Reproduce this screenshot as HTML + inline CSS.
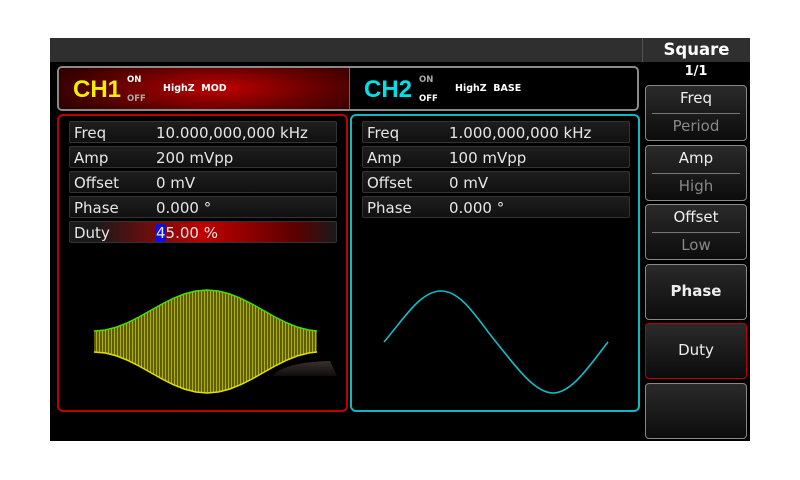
<!DOCTYPE html>
<html><head><meta charset="utf-8"><style>
*{margin:0;padding:0;box-sizing:border-box}
body{width:800px;height:480px;background:#fff;position:relative;overflow:hidden;font-family:"DejaVu Sans","Liberation Sans",sans-serif}
.scr{position:absolute;left:50px;top:38px;width:700px;height:403px;background:#000}
.top{position:absolute;left:50px;top:38px;width:592px;height:24px;background:#2f2f2f}
.abs{position:absolute}
.hdr{position:absolute;left:57px;top:66px;width:582px;height:45px;border:2px solid #8a8a8a;border-radius:5px;overflow:hidden;background:#000}
.h1{position:absolute;left:0;top:0;width:291px;height:100%;background:radial-gradient(ellipse 60% 90% at 55% 50%,#c00000 0%,#6a0000 55%,#300000 100%);border-right:1px solid #666}
.ch{position:absolute;font-weight:bold;font-size:24px;top:8px;font-family:"Liberation Sans",sans-serif}
.on{position:absolute;font-size:8.5px;font-weight:bold}
.mod{position:absolute;font-size:9.5px;font-weight:bold;color:#fff;top:15px}
.panel{position:absolute;top:114px;height:298px;border:2px solid;border-radius:6px}
.row{position:absolute;height:22px;border:1px solid #333;border-radius:2px;background:linear-gradient(#1e1e1e,#111);color:#e6e6e6;font-size:15px;line-height:22px}
.row .l{position:absolute;left:4px}
.row .v{position:absolute;left:86px}
.btn{position:absolute;left:645px;width:102px;border:1.5px solid #888;border-radius:4px;background:linear-gradient(#2a2a2a,#0c0c0c);color:#eee;font-size:15px;text-align:center}
.sep{position:absolute;left:6px;right:6px;height:1px;background:#777}
</style></head><body>
<div class="scr"></div>
<div class="top"></div>
<div class="abs" style="left:642px;top:38px;width:108px;height:24px;background:#2f2f2f;border-left:1px solid #555;color:#fff;font-weight:bold;font-size:16.5px;text-align:center;line-height:24px">Square</div>
<div class="abs" style="left:642px;top:64px;width:108px;text-align:center;color:#fff;font-size:13px;font-weight:bold">1/1</div>

<div class="hdr">
 <div class="h1"></div>
 <div class="ch" style="left:14px;color:#f0f000">CH1</div>
 <div class="on" style="left:68px;top:7px;color:#fff">ON</div>
 <div class="on" style="left:68px;top:26px;color:#aaa">OFF</div>
 <div class="mod" style="left:104px">HighZ&nbsp; MOD</div>
 <div class="ch" style="left:305px;color:#00e0e8">CH2</div>
 <div class="on" style="left:360px;top:7px;color:#aaa">ON</div>
 <div class="on" style="left:360px;top:26px;color:#fff">OFF</div>
 <div class="mod" style="left:396px">HighZ&nbsp; BASE</div>
</div>

<div class="panel" style="left:57px;width:291px;border-color:#c00000"></div>
<div class="panel" style="left:350px;width:290px;border-color:#10b8c0"></div>

<div class="row" style="left:69px;top:121px;width:268px"><span class="l">Freq</span><span class="v">10.000,000,000 kHz</span></div>
<div class="row" style="left:69px;top:146px;width:268px"><span class="l">Amp</span><span class="v">200 mVpp</span></div>
<div class="row" style="left:69px;top:171px;width:268px"><span class="l">Offset</span><span class="v">0 mV</span></div>
<div class="row" style="left:69px;top:196px;width:268px"><span class="l">Phase</span><span class="v">0.000 °</span></div>
<div class="row" style="left:69px;top:221px;width:268px;background:linear-gradient(90deg,#1a1a1a 10%,#c00000 50%,#5a0000 85%,#1a1a1a)"><span class="l">Duty</span><span class="v"><span style="background:#1010e0">4</span>5.00 %</span></div>

<div class="row" style="left:362px;top:121px;width:268px"><span class="l">Freq</span><span class="v">1.000,000,000 kHz</span></div>
<div class="row" style="left:362px;top:146px;width:268px"><span class="l">Amp</span><span class="v">100 mVpp</span></div>
<div class="row" style="left:362px;top:171px;width:268px"><span class="l">Offset</span><span class="v">0 mV</span></div>
<div class="row" style="left:362px;top:196px;width:268px"><span class="l">Phase</span><span class="v">0.000 °</span></div>

<svg class="abs" style="left:0;top:0" width="800" height="480">
 <defs>
  <pattern id="st" width="3" height="10" patternUnits="userSpaceOnUse"><rect width="3" height="10" fill="#5e5e00"/><rect width="1" height="10" fill="#b0b000"/></pattern>
  <linearGradient id="sh" x1="0" y1="0" x2="0" y2="1"><stop offset="0" stop-color="#3a3030"/><stop offset="1" stop-color="#100c0c"/></linearGradient>
 </defs>
 <path d="M272,376 Q285,362 330,361 L337,376 Z" fill="url(#sh)"/>
 <path d="M94,331 L105.3,330 L116.6,327.1 L127.9,322.6 L139.2,316.9 L150.5,310.5 L161.8,304.1 L173.1,298.4 L184.4,293.9 L195.7,291 L207,290 L218.3,291 L229.6,293.9 L240.9,298.4 L252.2,304.1 L263.5,310.5 L274.8,316.9 L286.1,322.6 L297.4,327.1 L308.7,330 L317,331 L317,352 L308.7,353 L297.4,355.9 L286.1,360.4 L274.8,366.1 L263.5,372.5 L252.2,378.9 L240.9,384.6 L229.6,389.1 L218.3,392 L207,393 L195.7,392 L184.4,389.1 L173.1,384.6 L161.8,378.9 L150.5,372.5 L139.2,366.1 L127.9,360.4 L116.6,355.9 L105.3,353 L94,352 Z" fill="url(#st)"/>
 <path d="M94,331 L105.3,330 L116.6,327.1 L127.9,322.6 L139.2,316.9 L150.5,310.5 L161.8,304.1 L173.1,298.4 L184.4,293.9 L195.7,291 L207,290 L218.3,291 L229.6,293.9 L240.9,298.4 L252.2,304.1 L263.5,310.5 L274.8,316.9 L286.1,322.6 L297.4,327.1 L308.7,330 L317,331" fill="none" stroke="#40e000" stroke-width="1.5"/>
 <path d="M94,352 L105.3,353 L116.6,355.9 L127.9,360.4 L139.2,366.1 L150.5,372.5 L161.8,378.9 L173.1,384.6 L184.4,389.1 L195.7,392 L207,393 L218.3,392 L229.6,389.1 L240.9,384.6 L252.2,378.9 L263.5,372.5 L274.8,366.1 L286.1,360.4 L297.4,355.9 L308.7,353 L317,352" fill="none" stroke="#e0e000" stroke-width="1.5"/>
 <path d="M384,342 C403,320 420,291 441,291 S478,320 496,342 S534,393 553,393 S590,365 608,342" fill="none" stroke="#10c0c8" stroke-width="1.6"/>
</svg>

<div class="btn" style="top:85px;height:56px"><div style="position:absolute;top:3px;width:100%">Freq</div><div class="sep" style="top:27px"></div><div style="position:absolute;top:31px;width:100%;color:#888">Period</div></div>
<div class="btn" style="top:145px;height:56px"><div style="position:absolute;top:3px;width:100%">Amp</div><div class="sep" style="top:27px"></div><div style="position:absolute;top:31px;width:100%;color:#888">High</div></div>
<div class="btn" style="top:204px;height:56px"><div style="position:absolute;top:3px;width:100%">Offset</div><div class="sep" style="top:27px"></div><div style="position:absolute;top:31px;width:100%;color:#888">Low</div></div>
<div class="btn" style="top:264px;height:56px;line-height:53px;font-weight:bold">Phase</div>
<div class="btn" style="top:323px;height:56px;line-height:53px;border-color:#c00000">Duty</div>
<div class="btn" style="top:383px;height:56px"></div>
</body></html>
